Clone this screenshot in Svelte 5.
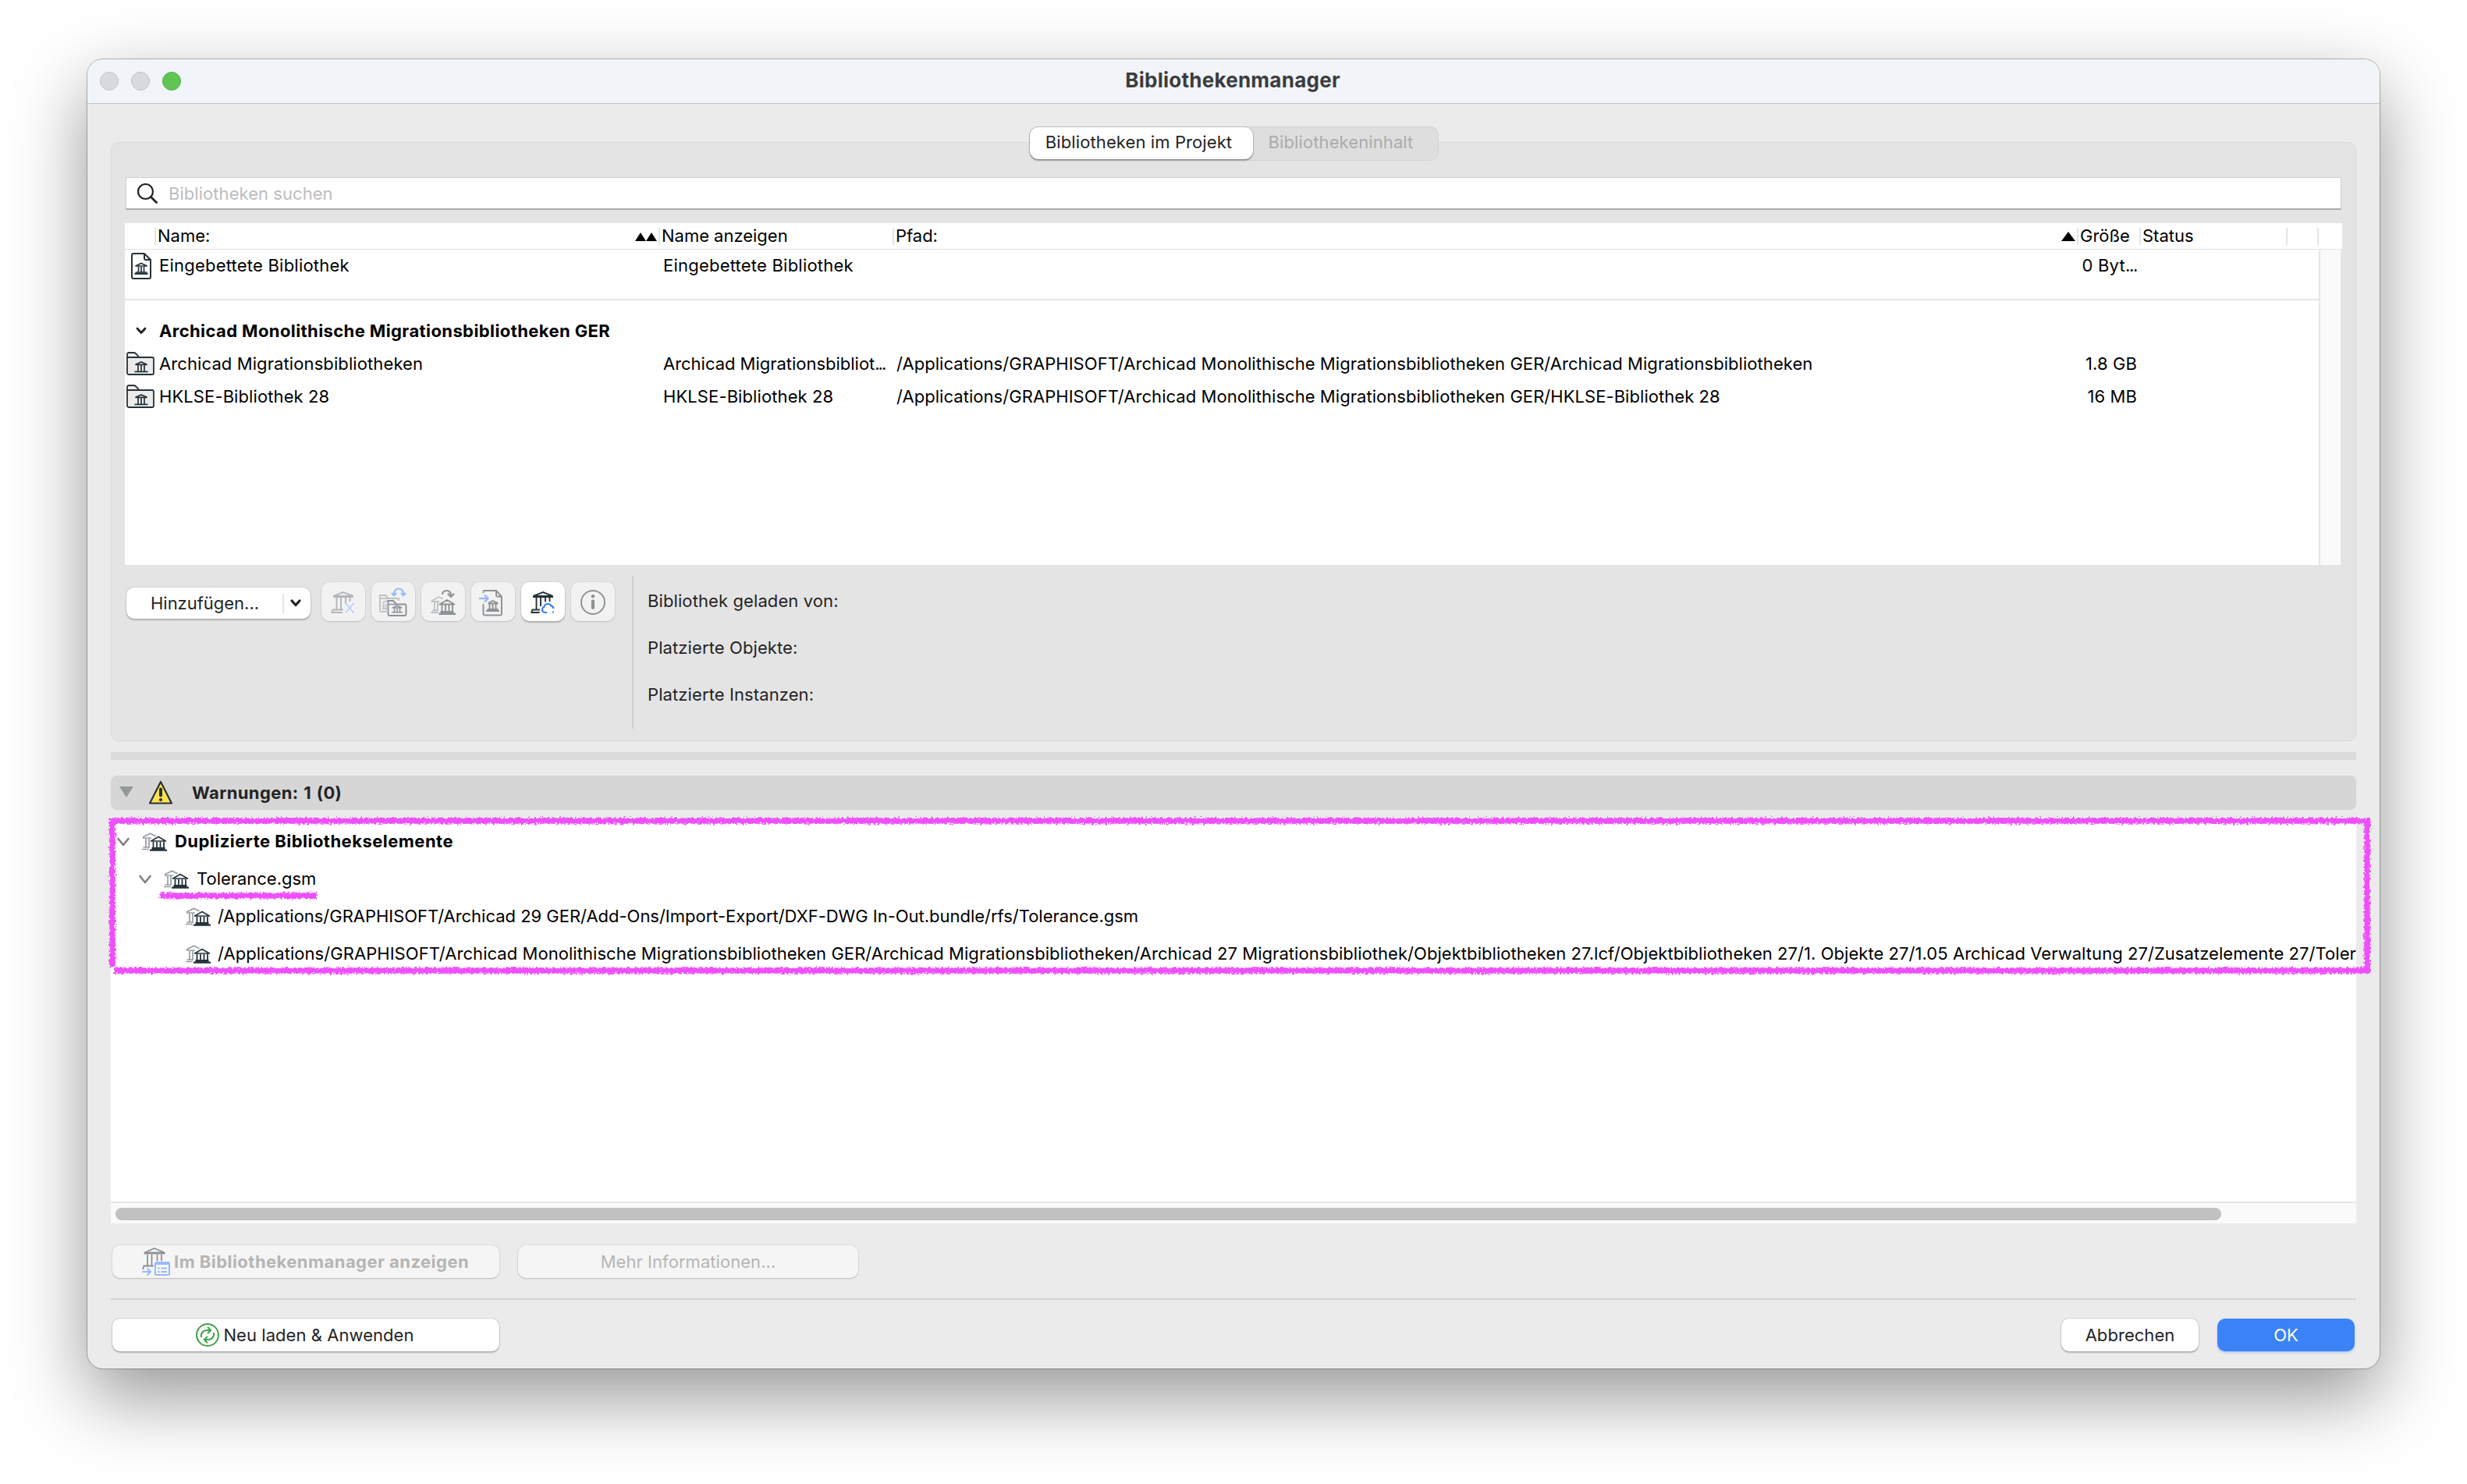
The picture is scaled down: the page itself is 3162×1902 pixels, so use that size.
<script>
  const root = '/Applications/GRAPHISOFT/Archicad Monolithische Migrationsbibliotheken GER/';

  const libraries = [
    {
      name: 'Archicad Migrationsbibliotheken',
      shown: 'Archicad Migrationsbibliot',
      clipped: true,
      path: root + 'Archicad Migrationsbibliotheken',
      size: '1.8 GB'
    },
    {
      name: 'HKLSE-Bibliothek 28',
      shown: 'HKLSE-Bibliothek 28',
      path: root + 'HKLSE-Bibliothek 28',
      size: '16 MB'
    }
  ];

  const details = ['Bibliothek geladen von:', 'Platzierte Objekte:', 'Platzierte Instanzen:'];

  const tree = [
    { level: 0, open: true, bold: true, text: 'Duplizierte Bibliothekselemente' },
    { level: 1, open: true, tight: true, text: 'Tolerance.gsm' },
    {
      level: 2,
      tight: true,
      text: '/Applications/GRAPHISOFT/Archicad 29 GER/Add-Ons/Import-Export/DXF-DWG In-Out.bundle/rfs/Tolerance.gsm'
    },
    {
      level: 2,
      text:
        root +
        'Archicad Migrationsbibliotheken/Archicad 27 Migrationsbibliothek/Objektbibliotheken 27.lcf/Objektbibliotheken 27/1. Objekte 27/1.05 Archicad Verwaltung 27/Zusatzelemente 27/Toler'
    }
  ];
</script>

{#snippet folderIcon()}
  <svg class="ink" width="36" height="30" viewBox="0 0 36 30">
    <path fill="#ebebeb" stroke-width="1.800" d="M1 7V3a2 2 0 0 1 2-2h6.5c1.6 0 2.6.9 3.6 2.1L16.5 7H33a2 2 0 0 1 2 2v18a2 2 0 0 1-2 2H3a2 2 0 0 1-2-2Z" />
    <path d="M1 7h16" />
    <path stroke-width="1.700" d="M11.500 16.300 19 13l7.500 3.300ZM15 17v8M19 17v8M23 17v8M10.500 25.300h17" />
  </svg>
{/snippet}

{#snippet duplicateIcon()}
  <svg class="tree-icon" width="32" height="24" viewBox="0 0 32 24">
    <g fill="none" stroke="#979c9f" stroke-width="1.700">
      <path d="M1 6 10.500 1.200 18 5M1 7h11M5 8v11M9 8v11" />
      <path d="M1.500 19H10M0 21.500h9" />
    </g>
    <path d="M10.500 10 21 3.500" stroke="#fff" stroke-width="1.400" />
    <g fill="none" stroke="#263238" stroke-width="1.800">
      <path d="M11.500 11 21 5.500l9.500 5.500Z" fill="#fff" stroke-width="1.600" stroke-linejoin="round" />
      <path d="M14.500 12v8M19 12v8M23.500 12v8M28 12v8" />
      <path d="M12.500 20.300h17M10 22.600h22" stroke-width="2.400" />
    </g>
  </svg>
{/snippet}

<div class="desktop">
  <div class="window">
    <header class="titlebar">
      <div class="lights"><i></i><i></i><i class="zoom"></i></div>
      <h1>Bibliothekenmanager</h1>
    </header>

    <main>
      <nav class="segments">
        <button class="segment active">Bibliotheken im Projekt</button>
        <button class="segment">Bibliothekeninhalt</button>
      </nav>

      <section class="panel">
        <div class="search">
          <svg width="28" height="28" viewBox="0 0 28 28" fill="none" stroke="#222" stroke-width="2.200" stroke-linecap="round">
            <circle cx="11.500" cy="11.500" r="9.500" />
            <path d="m18.500 18.500 7 7" stroke-width="2.800" />
          </svg>
          <span>Bibliotheken suchen</span>
        </div>

        <div class="table">
          <div class="cols head">
            <div></div>
            <div>Name:<svg class="sort" width="28" height="11" viewBox="0 0 28 11"><path d="M0 11 7 0l7 11ZM14 11 21 0l7 11Z" /></svg></div>
            <div>Name anzeigen</div>
            <div>Pfad:<svg class="sort" width="18" height="12" viewBox="0 0 18 12"><path d="M0 12 9 0l9 12Z" /></svg></div>
            <div>Größe</div>
            <div>Status</div>
            <div></div>
            <div></div>
          </div>
          <div class="body">
            <div class="rows">
              <div class="cols row embedded">
                <div class="cell-icon">
                  <svg class="ink" width="26" height="34" viewBox="0 0 26 34">
                    <path d="M3 1h14l8 8v22a2 2 0 0 1-2 2H3a2 2 0 0 1-2-2V3a2 2 0 0 1 2-2ZM17 1v6a2 2 0 0 0 2 2h6" />
                    <path stroke-width="1.700" d="M5.500 17 13 13.500l7.500 3.500ZM9.500 18v7M13 18v7M16.500 18v7M6 25h14" />
                    <path d="M4.500 26.700h17" stroke-width="2.400" />
                  </svg>
                </div>
                <div>Eingebettete Bibliothek</div>
                <div>Eingebettete Bibliothek</div>
                <div></div>
                <div class="size">0 Byt<span class="dots">...</span></div>
              </div>
              <div class="cols row group">
                <div class="cell-icon">
                  <svg width="14" height="10" viewBox="0 0 14 10" fill="none" stroke="#222" stroke-width="2.800" stroke-linecap="round" stroke-linejoin="round"><path d="m2 2 5 5.500L12 2" /></svg>
                </div>
                <div class="wide">Archicad Monolithische Migrationsbibliotheken GER</div>
              </div>
              {#each libraries as lib}
                <div class="cols row">
                  <div class="cell-icon folder">{@render folderIcon()}</div>
                  <div>{lib.name}</div>
                  <div class:clipped={lib.clipped}>{lib.shown}{#if lib.clipped}<span class="dots">...</span>{/if}</div>
                  <div class="path">{lib.path}</div>
                  <div class="size">{lib.size}</div>
                </div>
              {/each}
            </div>
            <div class="track"></div>
          </div>
        </div>

        <div class="actions">
          <div class="tools">
            <button class="add"><span>Hinzufügen...</span>
              <svg width="16" height="12" viewBox="0 0 16 12" fill="none" stroke="#222" stroke-width="3.200" stroke-linecap="round" stroke-linejoin="round"><path d="m3 3 5 5.500L13 3" /></svg>
            </button>
            <button class="tool" aria-label="Entfernen">
              <svg viewBox="0 0 56 50" stroke="#b3b6b8">
                <path d="M15.500 18 28 13l12.500 5ZM15 19h26M19.500 20v15M25 20v15M31 20v7M36.500 20v5M13 39l1.500-3.500H28M12.500 39H27" />
                <path d="m31 27 10.500 12.500M41.500 27 31 39.500" stroke="#bccffa" />
              </svg>
            </button>
            <button class="tool" aria-label="Ordner ersetzen">
              <svg viewBox="0 0 56 50" stroke="#c0c3c4">
                <path d="M20 38h-7.500a1.500 1.500 0 0 1-1.500-1.500V17h7l4 4h13v3M11 21h11M14 27l4-2.500h3M15.500 28v6M18.500 28v6M14 34.500h6" />
                <path stroke="#8d9294" fill="#f2f2f2" d="M21.500 41.500V24h6.500l4 4.500h11a1.500 1.500 0 0 1 1.500 1.500v11.500a1.500 1.500 0 0 1-1.500 1.500H23a1.500 1.500 0 0 1-1.500-1.500Z" />
                <path stroke="#8d9294" stroke-width="1.600" d="M21.500 28.500h11M27 33l6-2.700 6 2.700ZM29.500 34v4.500M33 34v4.500M36.500 34v4.500M26 38.700h14" />
                <path stroke="#9ab9fb" stroke-width="2.200" d="M29 17v-2.500a6 6 0 0 1 12 0V17M25.800 14l3.200 3.200 3.200-3.200M37.800 14l3.200 3.200 3.200-3.200" />
              </svg>
            </button>
            <button class="tool" aria-label="Bibliothek ersetzen">
              <svg viewBox="0 0 56 50" stroke="#c0c3c4">
                <path d="M13 24.500 22.500 19l5 2.500M12.500 25H23M17 26v10M21 26v10M14 36.500h8M12 39h10" />
                <path stroke="#8d9294" fill="#f2f2f2" stroke-linejoin="round" stroke-width="1.800" d="m23.500 28.500 9.500-5.500 9.500 5.500Z" />
                <path stroke="#8d9294" d="M26.500 29v9M31 29v9M35.500 29v9M40 29v9" />
                <path stroke="#8d9294" stroke-width="2.600" d="M24.500 38.300h17M22.500 40.700h21.500" />
                <path stroke="#8d9294" stroke-width="2.200" d="M27 16c0-3 2.500-5 5.500-5s5.500 2.500 5.500 5.500v2.500M33.800 14.800l4.200 4.200 4-4.200" />
              </svg>
            </button>
            <button class="tool" aria-label="Einbetten">
              <svg viewBox="0 0 56 50" stroke="#8d9294">
                <path d="M15.500 14v-1.500a1.500 1.500 0 0 1 1.500-1.500h15l7 7.500V41a1.500 1.500 0 0 1-1.500 1.500H17a1.500 1.500 0 0 1-1.500-1.500V28M32 11v6a1.500 1.500 0 0 0 1.500 1.500H39" />
                <path d="m22 27 5.500-3 6.500 3M21.500 27.500h13M23.500 28v7M27.500 28v7M31.500 28v7M20.500 35h14M19 37h17" />
                <path stroke="#9ab9fb" stroke-width="2.400" d="M10 21h11M17 16.500l4.500 4.500-4.500 4.500" />
              </svg>
            </button>
            <button class="tool enabled" aria-label="Aus der Cloud laden">
              <svg viewBox="0 0 56 50" stroke="#263238">
                <path d="M15.500 18 28 13l12.500 5ZM15 19h26M19.500 20v15M25 20v11M31 20v5.500M36.500 20v5M13 39l1.500-3.500H24M12.500 39H23.500" />
                <path stroke="#3b82f7" stroke-width="2.200" d="M33 39h-2.500a3.700 3.700 0 0 1-1-7.200c.3-2.300 2-3.800 4.500-3.800 2.200 0 3.800 1 4.600 2.700 1.700.2 2.700 1.300 2.900 3.300M40 38.500h2" />
              </svg>
            </button>
            <button class="tool" aria-label="Info">
              <svg viewBox="0 0 56 50" stroke="#8d9294">
                <circle cx="28" cy="26" r="15" />
                <path d="M28 24.500v8.500" stroke-width="4.200" stroke-linecap="round" />
                <circle cx="28" cy="18.200" r="2.200" fill="#8d9294" stroke="none" />
              </svg>
            </button>
          </div>
          <div class="details">
            {#each details as label}<p>{label}</p>{/each}
          </div>
        </div>
      </section>

      <div class="splitter"></div>

      <div class="warnbar">
        <svg class="disclosure" width="18" height="14" viewBox="0 0 18 14"><path fill="#939899" d="M0 0h18L9 14Z" /></svg>
        <svg width="32" height="32" viewBox="0 0 32 32">
          <path d="M16 2 30 29.500H2Z" fill="#fce34d" stroke="#263238" stroke-width="2.200" stroke-linejoin="round" />
          <path d="M16 11.500v8" stroke="#263238" stroke-width="4" stroke-linecap="round" />
          <circle cx="16" cy="25" r="2.100" fill="#263238" />
        </svg>
        <strong>Warnungen: 1 (0)</strong>
      </div>

      <section class="warnings">
        <div class="tree">
          {#each tree as node}
            <div class="node level-{node.level}" class:bold={node.bold} class:tight={node.tight}>
              {#if node.open}
                <svg class="twist" width="16" height="12" viewBox="0 0 16 12" fill="none" stroke="#808080" stroke-width="2.600" stroke-linecap="round" stroke-linejoin="round"><path d="m1.500 2 6.500 8 6.500-8" /></svg>
              {/if}
              {@render duplicateIcon()}
              <span>{node.text}</span>
            </div>
          {/each}
        </div>
        <div class="hscroll"><div class="thumb"></div></div>

        <!-- Hand-drawn marker around the duplicate entries -->
        <svg class="marker" width="2910" height="212" viewBox="0 0 2910 212">
          <filter id="chalk" filterUnits="userSpaceOnUse" x="0" y="0" width="2910" height="212">
            <feTurbulence type="fractalNoise" baseFrequency="0.35" numOctaves="2" seed="4" />
            <feDisplacementMap in="SourceGraphic" scale="7" xChannelSelector="R" yChannelSelector="G" />
          </filter>
          <g filter="url(#chalk)" fill="none" stroke="#ee50fa" stroke-width="7.600">
            <path d="M10 10H2900V202H12M10 6V198" />
            <path d="M71 106H272" />
          </g>
        </svg>
      </section>

      <div class="buttons">
        <button class="push dim wide-l">
          <svg width="36" height="36" viewBox="0 0 36 36" fill="none">
            <g stroke="#8d9294" stroke-width="1.800">
              <path d="M3 6.500 16 1l13 5.500ZM2.500 7.500H29.500M7 9v14M12.500 9v14M19.500 9v8M25 9v8M1 28l1.500-4.500H15" />
            </g>
            <rect x="17" y="19" width="18" height="16" rx="1.500" fill="#f5f5f5" stroke="#9ab9fb" stroke-width="2" />
            <path d="M17 21h18M20 26.500h2.500M24.500 26.500H32M20 31h2.500M24.500 31H32M0 31h10.500M6.500 26.500 11 31l-4.500 4.500" stroke="#9ab9fb" stroke-width="2.200" />
          </svg>
          <b>Im Bibliothekenmanager anzeigen</b>
        </button>
        <button class="push dim wide-m">Mehr Informationen...</button>
      </div>

      <footer>
        <button class="push wide-l reload">
          <svg width="30" height="30" viewBox="0 0 30 30" fill="none" stroke="#43a24f" stroke-width="2">
            <circle cx="15" cy="15" r="14" />
            <path d="M7 18c-1.200-4.500 2-9 7.500-9H19M15 4.800 19.300 9 15 13M23 12c1.200 4.500-2 9-7.500 9H11M15 17l-4.300 4 4.300 4.200" />
          </svg>
          Neu laden &amp; Anwenden
        </button>
        <span class="spacer"></span>
        <button class="push small">Abbrechen</button>
        <button class="push small primary">OK</button>
      </footer>
    </main>
  </div>
</div>

<style>
  :global(body) { margin: 0; background: #fff; }
  .desktop, .desktop * { box-sizing: border-box; }
  .desktop {
    width: 3162px;
    height: 1902px;
    padding: 76px 112px;
    overflow: hidden;
    background: #fff;
    color: #000;
    font: 400 22px/26px Inter, "Liberation Sans", sans-serif;
    letter-spacing: 0.05px;
  }
  svg { display: block; flex: none; }
  button { font: inherit; letter-spacing: inherit; color: #242424; border: 0; padding: 0; margin: 0; background: none; }

  .window {
    width: 2938px;
    height: 1678px;
    display: flex;
    flex-direction: column;
    border-radius: 20px;
    background: #ebebeb;
    box-shadow: 0 0 0 1px rgba(0, 0, 0, 0.26), 0 36px 96px rgba(0, 0, 0, 0.42);
  }
  .titlebar {
    flex: none;
    height: 57px;
    display: grid;
    grid-template-columns: 1fr auto 1fr;
    align-items: center;
    padding: 0 18px 0 16px;
    background: #f1f4f8;
    border-bottom: 1px solid #c4c5c7;
    border-radius: 20px 20px 0 0;
  }
  .lights { display: flex; gap: 16px; }
  .lights i { width: 24px; height: 24px; border-radius: 50%; background: #d7dbde; border: 1px solid #bfc3c6; }
  .lights .zoom { background: #61c554; border-color: #55b048; }
  h1 { margin: 0; padding-bottom: 2px; font-size: 26px; line-height: 30px; font-weight: 700; letter-spacing: 0.25px; color: #3c3c3e; }

  main { flex: 1; display: flex; flex-direction: column; padding: 0 30px; }

  .segments {
    position: relative;
    z-index: 1;
    align-self: center;
    display: flex;
    width: 525px;
    height: 44px;
    margin-top: 29px;
    border-radius: 12px;
    background: #dedede;
    box-shadow: inset 0 0 0 1px #d4d4d4;
  }
  .segment { flex: 1; color: #ababab; padding-bottom: 4px; padding-right: 12px; letter-spacing: 0.1px; }
  .segment.active {
    flex: none;
    width: 286px;
    height: 41px;
    margin: 1px 0 0 1px;
    padding: 0 6px 3px 0;
    border-radius: 11px;
    background: #fff;
    color: #242424;
    box-shadow: 0 0 0 1px rgba(0, 0, 0, 0.12), 0 2px 2px rgba(0, 0, 0, 0.28);
  }

  .panel {
    flex: none;
    height: 768px;
    margin-top: -24px;
    padding: 44px 17px 0;
    border: 1px solid #d9d9d9;
    border-radius: 10px;
    background: #e4e4e4;
  }
  .search {
    display: flex;
    align-items: center;
    gap: 13px;
    height: 42px;
    margin: 0 1px;
    padding-left: 13px;
    background: #fff;
    border: 1px solid #cdcdcd;
    border-bottom: 2px solid #ababab;
    color: #bdbdbd;
  }

  .table { height: 438px; margin-top: 17px; display: flex; flex-direction: column; background: #fff; }
  .cols { display: grid; grid-template-columns: 40px 646px 300px 1518px 80px 188px 40px 30px; align-items: center; white-space: nowrap; }
  .head { height: 34px; border-bottom: 1px solid #e3e3e3; letter-spacing: -0.02px; }
  .head > div {
    display: flex;
    align-items: center;
    justify-content: space-between;
    height: 22px;
    padding: 0 2px 1px;
    border-right: 2px solid #e5e5e5;
  }
  .head > div:last-child { border: 0; }
  .sort { margin-top: 2px; }
  .body { flex: 1; display: flex; }
  .rows { width: 2812px; }
  .row { height: 42px; letter-spacing: 0.1px; }
  .row > div { padding-left: 4px; }
  .row > .path { padding-left: 3px; letter-spacing: 0.05px; }
  .row > .cell-icon { display: flex; justify-content: center; padding: 0; width: 42px; }
  .row > .cell-icon.folder { margin-left: -1px; }
  .row > .wide { grid-column: 2 / 5; }
  .row > .size { padding: 0 5px 0 0; justify-self: end; }
  .clipped { letter-spacing: -0.02px; }
  .dots { letter-spacing: -1.3px; }
  .clipped .dots { letter-spacing: -2px; }
  .embedded { height: 65px; padding-bottom: 24px; border-bottom: 2px solid #e5e5e5; letter-spacing: 0.22px; }
  .embedded svg { margin-top: 3px; }
  .group { margin-top: 18px; font-weight: 700; letter-spacing: 0.4px; }
  .track { flex: 1; background: #fafafa; border: solid #e6e6e6; border-width: 0 2px; }
  .ink { fill: none; stroke: #263238; stroke-width: 2; }

  .actions { display: flex; padding-top: 14px; }
  .tools { display: flex; gap: 8px; width: 650px; padding: 8px 0 0 2px; }
  .add {
    display: flex;
    align-items: center;
    width: 236px;
    height: 40px;
    margin: 7px 6px 0 0;
    border-radius: 10px;
    background: #fff;
    box-shadow: 0 0 0 1px rgba(0, 0, 0, 0.08), 0 2px 2px rgba(0, 0, 0, 0.2);
  }
  .add span { width: 202px; height: 25px; padding-left: 31px; text-align: left; line-height: 25px; border-right: 2px solid #e4e4e4; letter-spacing: -0.02px; }
  .add svg { margin-left: 7px; }
  .tool { width: 56px; height: 50px; border-radius: 11px; background: #f2f2f2; box-shadow: 0 0 0 1px rgba(0, 0, 0, 0.04), 0 1px 2px rgba(0, 0, 0, 0.12); }
  .tool svg { width: 56px; height: 50px; fill: none; stroke-width: 1.9; }
  .tool.enabled { background: #fff; box-shadow: 0 0 0 1px rgba(0, 0, 0, 0.06), 0 2px 2px rgba(0, 0, 0, 0.22); }
  .details { height: 196px; padding: 2px 0 0 18px; border-left: 2px solid #cfcfcf; color: #242424; letter-spacing: 0.1px; }
  .details p { margin: 0; height: 60px; line-height: 60px; }

  .splitter { flex: none; height: 10px; margin-top: 14px; background: #dbdbdb; }
  .warnbar {
    flex: none;
    display: flex;
    align-items: center;
    height: 44px;
    margin-top: 20px;
    padding-left: 11px;
    border-radius: 8px;
    background: #d6d6d6;
    color: #242424;
  }
  .disclosure { margin: 0 19px 3px 0; }
  .warnbar strong { margin-left: 24px; letter-spacing: 0.4px; word-spacing: 1px; }

  .warnings { position: relative; flex: none; height: 516px; margin-top: 14px; display: flex; flex-direction: column; background: #fff; }
  .tree { flex: 1; overflow: hidden; padding-top: 3px; }
  .node { display: flex; align-items: center; height: 48px; white-space: nowrap; }
  .node span { padding-bottom: 2px; }
  .twist { margin-right: 16px; }
  .tree-icon { margin-right: 9px; }
  .level-0 { padding-left: 8px; }
  .level-1 { padding-left: 36px; }
  .level-2 { padding-left: 96px; }
  .level-0 .tree-icon,
  .level-1 .tree-icon { margin-right: 10px; }
  .tight { letter-spacing: -0.02px; }
  .bold { font-weight: 700; letter-spacing: 0.47px; }
  .hscroll { height: 28px; padding: 6px 0 0 6px; background: #fafafa; border-top: 2px solid #e6e6e6; }
  .thumb { width: 2699px; height: 16px; border-radius: 8px; background: #c1c1c1; }
  .marker { position: absolute; left: -8px; top: -10px; pointer-events: none; }

  .buttons { display: flex; gap: 24px; padding: 28px 2px 26px; border-bottom: 2px solid #d4d4d4; }
  footer { display: flex; gap: 24px; padding: 24px 2px; }
  .spacer { flex: 1; }
  .push {
    display: flex;
    align-items: center;
    justify-content: center;
    height: 42px;
    border-radius: 10px;
    background: #fff;
    box-shadow: 0 0 0 1px rgba(0, 0, 0, 0.1), 0 2px 2px rgba(0, 0, 0, 0.2);
  }
  .push.dim { background: #f5f5f5; color: #b5b5b5; box-shadow: 0 0 0 1px rgba(0, 0, 0, 0.05), 0 1px 2px rgba(0, 0, 0, 0.16); }
  .push b { letter-spacing: 0.45px; }
  .wide-l { width: 496px; gap: 5px; }
  .reload { padding-right: 2px; }
  .dim.wide-l { justify-content: flex-start; padding-left: 38px; }
  .wide-m { width: 436px; }
  .small { width: 176px; }
  .push.primary { background: #3b82f7; color: #fff; box-shadow: 0 2px 3px rgba(59, 130, 247, 0.3); }
</style>
